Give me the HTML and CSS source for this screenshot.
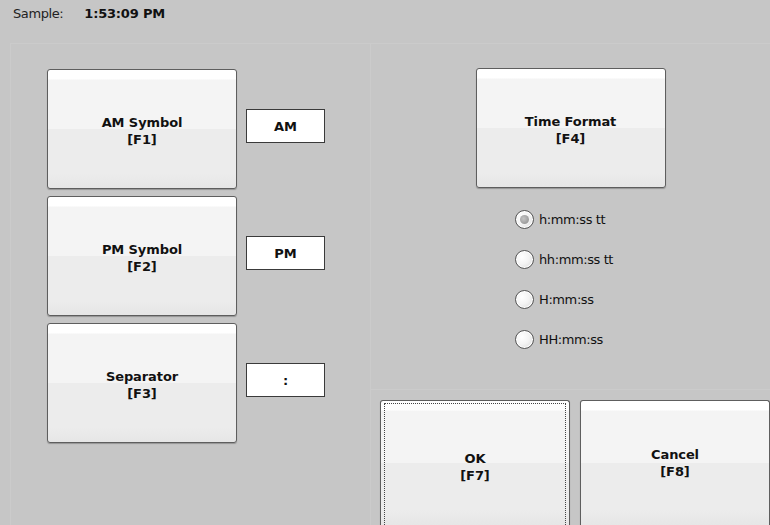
FILE: index.html
```html
<!DOCTYPE html>
<html lang="en">
<head>
  <meta charset="UTF-8">
  <meta name="viewport" content="width=device-width, initial-scale=1.0">
  <title>Time Settings</title>
  <link rel="stylesheet" href="styles.css">
</head>
<body>
  <div class="header">
    <span class="sample-label">Sample:</span>
    <span class="sample-value">1:53:09 PM</span>
  </div>

  <div class="main">
    <div class="panel left-panel">
      <div class="field-row">
        <button class="key-btn">AM Symbol<br>[F1]</button>
        <div class="value-box">AM</div>
      </div>
      <div class="field-row">
        <button class="key-btn">PM Symbol<br>[F2]</button>
        <div class="value-box">PM</div>
      </div>
      <div class="field-row">
        <button class="key-btn">Separator<br>[F3]</button>
        <div class="value-box">:</div>
      </div>
    </div>

    <div class="right-col">
      <div class="panel format-panel">
        <button class="key-btn">Time Format<br>[F4]</button>
        <div class="radio-list">
          <label class="radio-row"><span class="radio checked"></span>h:mm:ss tt</label>
          <label class="radio-row"><span class="radio"></span>hh:mm:ss tt</label>
          <label class="radio-row"><span class="radio"></span>H:mm:ss</label>
          <label class="radio-row"><span class="radio"></span>HH:mm:ss</label>
        </div>
      </div>
      <div class="panel action-panel">
        <button class="key-btn action-btn focused"><span class="focus-ring">OK<br>[F7]</span></button>
        <button class="key-btn action-btn">Cancel<br>[F8]</button>
      </div>
    </div>
  </div>
</body>
</html>
```

FILE: styles.css
```css
* {
  margin: 0;
  padding: 0;
  box-sizing: border-box;
  font-family: 'DejaVu Sans', Tahoma, sans-serif;
}

body {
  background: #c6c6c6;
  color: #111;
  width: 770px;
  height: 525px;
  overflow: hidden;
}

.header {
  height: 43px;
  padding: 6px 0 0 13px;
  font-size: 13px;
  display: flex;
  gap: 21px;
}

.sample-label {
  color: #222;
  letter-spacing: -0.4px;
}

.sample-value {
  font-weight: bold;
  letter-spacing: -0.2px;
}

.main {
  display: flex;
  padding-left: 10px;
  height: 482px;
}

.panel {
  border-top: 1px solid #cbcbcb;
  border-left: 1px solid #cbcbcb;
}

.left-panel {
  width: 362px;
  padding: 25px 0 0 36px;
  display: flex;
  flex-direction: column;
  gap: 7px;
}

.field-row {
  display: flex;
  align-items: center;
  gap: 9px;
}

.key-btn {
  width: 190px;
  height: 120px;
  border: 1px solid #5e5e5e;
  border-radius: 3px;
  background: linear-gradient(to bottom, #ffffff 0, #ffffff 9px, #f4f4f4 10px, #f4f4f4 50%, #ececec 50%, #ececec 88%, #e6e6e6 100%);
  box-shadow: 0 1px 1px rgba(0, 0, 0, 0.25);
  font-size: 13px;
  font-weight: bold;
  line-height: 17px;
  color: #111;
  text-align: center;
  letter-spacing: -0.1px;
  padding-top: 4px;
}

.value-box {
  width: 79px;
  height: 34px;
  margin-bottom: 6px;
  border: 1px solid #3a3a3a;
  background: #fff;
  font-size: 13px;
  font-weight: bold;
  display: flex;
  align-items: center;
  justify-content: center;
}

.right-col {
  flex: 1;
  display: flex;
  flex-direction: column;
}

.format-panel {
  height: 357px;
  display: flex;
  flex-direction: column;
  align-items: center;
  padding-top: 24px;
}

.radio-list {
  align-self: flex-start;
  display: flex;
  flex-direction: column;
  gap: 22px;
  margin: 22px 0 0 144px;
}

.radio-row {
  display: flex;
  align-items: center;
  gap: 5px;
  height: 18px;
  font-size: 13px;
  color: #111;
  letter-spacing: -0.4px;
}

.radio {
  width: 19px;
  height: 19px;
  border-radius: 50%;
  border: 1px solid #555;
  background: radial-gradient(circle at 35% 35%, #ffffff 0, #f4f4f4 45%, #d6d6d6 100%);
  box-shadow: inset 0 0 0 1px #fff;
  position: relative;
}

.radio.checked::after {
  content: '';
  position: absolute;
  left: 4px;
  top: 4px;
  width: 9px;
  height: 9px;
  border-radius: 50%;
  background: radial-gradient(circle at 40% 40%, #c4c4c4 0, #8a8a8a 100%);
}

.action-panel {
  flex: 1;
  display: flex;
  gap: 10px;
  padding: 10px 0 0 9px;
}

.action-btn {
  width: 190px;
  height: 125px;
  border-bottom: none;
  border-radius: 3px 3px 0 0;
  padding: 0;
}

.action-btn.focused {
  padding: 2px 3px 0;
}

.focus-ring {
  display: flex;
  align-items: center;
  justify-content: center;
  height: 100%;
  padding-top: 4px;
  border: 1px dotted #444;
  border-bottom: none;
}
```
